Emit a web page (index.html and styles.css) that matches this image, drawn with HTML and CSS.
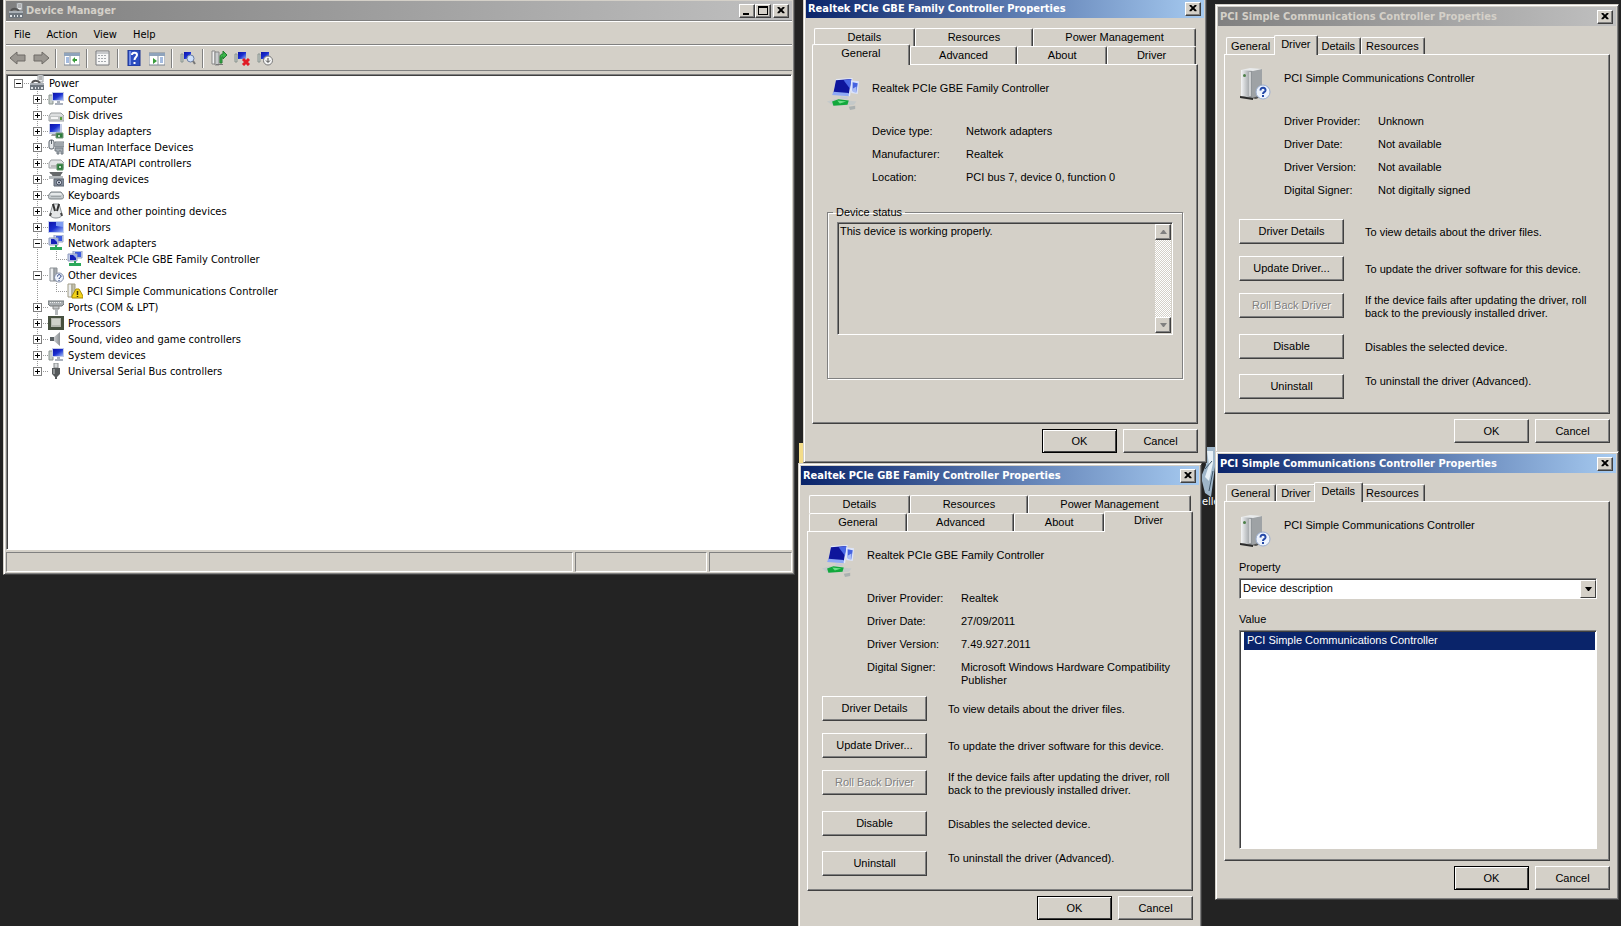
FILE: index.html
```html
<!DOCTYPE html>
<html lang="en">
<head>
<meta charset="utf-8">
<title>Device Manager</title>
<link rel="stylesheet" href="styles.css">
</head>
<body>
<svg class="sprite" width="0" height="0" aria-hidden="true">
  <defs>
    <linearGradient id="g-screen" x1="0" y1="0" x2="1" y2="1"><stop offset="0" stop-color="#0d12a8"/><stop offset=".5" stop-color="#1a2fd0"/><stop offset="1" stop-color="#9db8f5"/></linearGradient>
    <linearGradient id="g-metal" x1="0" y1="0" x2="1" y2="0"><stop offset="0" stop-color="#f4f5f6"/><stop offset="1" stop-color="#8b9094"/></linearGradient>
    <symbol id="i-root" viewBox="0 0 16 16"><path d="M9 0h5v7H9z" fill="#eceef0" stroke="#9a9fa3"/><path d="M10 2h3M10 4h3" stroke="#777"/><path d="M3 8c1-3 6-3 8 0" fill="none" stroke="#555" stroke-width="2"/><path d="M1 8h14v3H1z" fill="#a9afb5"/><path d="M1 10h14v5H1z" fill="#6d757d"/><path d="M2 12h2v2H2zM6 12h1v2H6zM9 12h1v2H9zM12 12h2v2h-2z" fill="#dfe3e6"/></symbol>
    <symbol id="i-pc" viewBox="0 0 16 16"><path d="M1 4h4v9H1z" fill="#c5ccc8" stroke="#8b9590"/><path d="M4 1h12v9H4z" fill="#c3cbe6"/><path d="M5 2h10v7H5z" fill="url(#g-screen)"/><path d="M9 10h3v2h3v2H7v-2h2z" fill="#aab1bd"/></symbol>
    <symbol id="i-disk" viewBox="0 0 16 16"><path d="M3 6h10l3 3v5H1V9z" fill="#dcdedf" stroke="#9b9fa1"/><path d="M2 9h13v4H2z" fill="#c1c5c5"/><path d="M3 10h7v2H3z" fill="#f5f5f5"/><path d="M12 10h2v3h-2z" fill="#5aa03c"/></symbol>
    <symbol id="i-display" viewBox="0 0 16 16"><path d="M1 1h13v10H1z" fill="#c3cbe6"/><path d="M2 1h10v8H2z" fill="url(#g-screen)"/><path d="M4 11h5v2H3z" fill="#999"/><path d="M8 10h7v5H8z" fill="#2d7d3c" stroke="#76977a"/><path d="M10 12h2v2h-2z" fill="#b9d8bc"/></symbol>
    <symbol id="i-hid" viewBox="0 0 16 16"><rect x="1" y="1" width="5" height="9" rx="2" fill="#e5e8eb" stroke="#59616a"/><path d="M3.500 1v4" stroke="#59616a"/><path d="M7 3h9v5H7z" fill="#d0d5d9" stroke="#727a82"/><path d="M8 5h7M8 7h7" stroke="#727a82"/><path d="M7 9h8v6h-2v-3h-2v3H9v-3H7z" fill="#a5adb4" stroke="#727a82"/></symbol>
    <symbol id="i-ide" viewBox="0 0 16 16"><path d="M3 5h10l3 3v5H1V8z" fill="#e3e5e6" stroke="#9b9fa1"/><path d="M3 10h6v2H3z" fill="#bbb"/><path d="M9 9h6v6H9z" fill="#2d7d3c" stroke="#5d8f63"/><path d="M11 11h2v2h-2z" fill="#c9e0ca"/></symbol>
    <symbol id="i-imaging" viewBox="0 0 16 16"><path d="M1 1h14l-3 4H5z" fill="#777d80"/><path d="M2 2h12M4 4h9" stroke="#555"/><path d="M1 5h14v3H1z" fill="#b5babd"/><path d="M6 8h10v7H6z" fill="#828c9b" stroke="#5c6470"/><circle cx="11" cy="11.500" r="2.500" fill="#dde4ef" stroke="#3b4250"/><circle cx="11" cy="11.500" r="1" fill="#28324a"/></symbol>
    <symbol id="i-keyboard" viewBox="0 0 16 16"><path d="M3 5h10l3 4c0 2-1 3-3 3H3c-2 0-3-1-3-3z" fill="#c4c9cc" stroke="#7d8387"/><path d="M3 6h10l1 2H2z" fill="#e6e9ea"/><path d="M3 9.500h10" stroke="#9da3a6"/></symbol>
    <symbol id="i-mouse" viewBox="0 0 16 16"><path d="M5 1h6l3 10c0 3-3 4-6 4s-6-1-6-4z" fill="#e4e6e7" stroke="#8a9094"/><path d="M5 1l2 7M11 1L9 8" stroke="#333" stroke-width="2"/><path d="M3 10l-1 3M13 10l1 3" stroke="#444" stroke-width="2"/></symbol>
    <symbol id="i-monitor" viewBox="0 0 16 16"><path d="M0 2h16v12H0z" fill="#c8d3ee"/><path d="M1 3h14v10H1z" fill="url(#g-screen)"/><path d="M8 3h7v5L8 7z" fill="#7f9cf0"/></symbol>
    <symbol id="i-net" viewBox="0 0 16 16"><path d="M6 0h9v7H6z" fill="#cbd5ef" stroke="#95a2c4"/><path d="M8 1h6v5H8z" fill="#3d5be0"/><path d="M1 3h9v7H1z" fill="#c3cde8" stroke="#8f9bbd"/><path d="M3 4h6v5H3z" fill="#1420b8"/><path d="M6 4h3v3z" fill="#8ea7f2"/><path d="M7 10h2v2h5v3H2v-3h5z" fill="#2aa85a"/></symbol>
    <symbol id="i-unknown" viewBox="0 0 16 16"><path d="M2 1h4v13H2z" fill="#eceeef" stroke="#8b9095"/><path d="M6 1h3v13H6z" fill="#a5aaae" stroke="#8b9095"/><circle cx="11" cy="10.500" r="4.500" fill="#eef3fc" stroke="#7f8ba5"/><path d="M9.500 9.500c0-2.500 3.500-2.500 3.500 0 0 1-2 1-2 2.500M11 13v1" fill="none" stroke="#1c3478"/></symbol>
    <symbol id="i-warn" viewBox="0 0 16 16"><path d="M1 1h4v13H1z" fill="#eceeef" stroke="#a09c85"/><path d="M5 1h3v13H5z" fill="#c4c2ae" stroke="#a09c85"/><path d="M9 6h3l4 7v2H5v-2z" fill="#f2d21b" stroke="#a88b00"/><path d="M10.500 8v4M10.500 13v1" stroke="#3a3000" stroke-width="1.500"/></symbol>
    <symbol id="i-port" viewBox="0 0 16 16"><path d="M0 2h16v3l-2 2H2L0 5z" fill="#a9aeb1" stroke="#73787b"/><path d="M2 3.500h12" stroke="#eee" stroke-dasharray="1 1"/><path d="M5 7h6v3H5z" fill="#c6cacc" stroke="#888"/><path d="M7 10h3v6H7z" fill="#b5b9bb"/></symbol>
    <symbol id="i-cpu" viewBox="0 0 16 16"><path d="M0 1h16v14H0z" fill="#46503e"/><path d="M3 3h10v9H3z" fill="#b4b7ae"/><path d="M4 4h8v6H4z" fill="#cfd1c9"/></symbol>
    <symbol id="i-sound" viewBox="0 0 16 16"><path d="M2 6h4l6-5v14l-6-5H2z" fill="url(#g-metal)"/><path d="M2 6h4v4H2z" fill="#596063"/></symbol>
    <symbol id="i-usb" viewBox="0 0 16 16"><path d="M6 0h4v5H6z" fill="#d5d8d9" stroke="#85898b"/><path d="M4 5h8v6l-3 3v2H7v-2l-3-3z" fill="#55595b"/><path d="M5 6h2v5H5z" fill="#8e9294"/></symbol>

    <symbol id="t-back" viewBox="0 0 16 16"><path d="M0 8l7-6v3h8v6H7v3z" fill="#9a9690" stroke="#6e6b66"/></symbol>
    <symbol id="t-forward" viewBox="0 0 16 16"><path d="M16 8L9 2v3H1v6h8v3z" fill="#9a9690" stroke="#6e6b66"/></symbol>
    <symbol id="t-tree" viewBox="0 0 16 16"><path d="M0 3h16v12H0z" fill="#fff" stroke="#7a8490"/><path d="M0 3h16v3H0z" fill="#8fa3bb"/><path d="M6 6v9" stroke="#8a93a0"/><path d="M2 8h3M2 10h3M2 12h3" stroke="#4a78c0"/><path d="M13 9h-2V7l-3 3 3 3v-2h2z" fill="#3a9c3a"/></symbol>
    <symbol id="t-list" viewBox="0 0 16 16"><path d="M1 1h13v14H1z" fill="#f7f7f7" stroke="#77797c"/><path d="M1 3h13" stroke="#9a9da1"/><path d="M3 5.500h9M3 8.500h9M3 11.500h9" stroke="#a4a8ac" stroke-dasharray="2 1"/></symbol>
    <symbol id="t-help" viewBox="0 0 16 16"><path d="M2 0h12v16H2z" fill="#2c4dc0" stroke="#1b3390"/><path d="M3 1h2v14H3z" fill="#6e8ae6"/><path d="M6 5c0-3 5-3 5 0 0 2-2.500 2-2.500 5M8.500 12v2" fill="none" stroke="#fff" stroke-width="2"/></symbol>
    <symbol id="t-props" viewBox="0 0 16 16"><path d="M0 3h16v12H0z" fill="#fff" stroke="#7a8490"/><path d="M0 3h16v3H0z" fill="#8fa3bb"/><path d="M9 6v9" stroke="#8a93a0"/><path d="M11 8h3M11 10h3M11 12h3" stroke="#4a78c0"/><path d="M4 8l4 3-4 3z" fill="#3a9c3a"/></symbol>
    <symbol id="t-scan" viewBox="0 0 16 16"><path d="M1 4h2v8H1z" fill="#c5ccc8" stroke="#8b9590"/><path d="M4 2h7v7H4z" fill="url(#g-screen)"/><circle cx="10.500" cy="8.500" r="3.500" fill="#cfe0fa" stroke="#6c7fa5"/><path d="M13 11l2 3" stroke="#777" stroke-width="2"/></symbol>
    <symbol id="t-update" viewBox="0 0 16 16"><path d="M1 1h3v13H1z" fill="#f2f2f2" stroke="#888"/><path d="M4 2h4v13H4z" fill="#c8cbcd" stroke="#888"/><path d="M5 14.500h7" stroke="#777"/><path d="M9 13V7c0-2 1-3 3-3V1l4 4-4 4V7h-1v6z" fill="#39b54a" stroke="#227a31"/></symbol>
    <symbol id="t-uninstall" viewBox="0 0 16 16"><path d="M1 4h2v8H1z" fill="#c5ccc8" stroke="#8b9590"/><path d="M4 2h8v7H4z" fill="url(#g-screen)"/><path d="M9 9l6 6M15 9l-6 6" stroke="#e01b24" stroke-width="3"/></symbol>
    <symbol id="t-disable" viewBox="0 0 16 16"><path d="M1 4h2v8H1z" fill="#c5ccc8" stroke="#8b9590"/><path d="M4 2h8v7H4z" fill="url(#g-screen)"/><circle cx="11" cy="10.500" r="4.500" fill="#f4f4f4" stroke="#777"/><path d="M11 8v4M9 10.500l2 2 2-2" fill="none" stroke="#444"/></symbol>

    <symbol id="big-net" viewBox="1 0 25 30" preserveAspectRatio="none"><path d="M19 2l7 1-1 12-5-1z" fill="#dce4fa"/><path d="M21 4l4 1-1 8-3-1z" fill="#4562e0"/><path d="M21 10l3-2v6l-3-1z" fill="#a9bbf5"/><path d="M8 1l13-1-2 17-13-2z" fill="#e1e8fb"/><path d="M8 2l12-1-2 14-12-1z" fill="#0e159c"/><path d="M14 2l6-1-1 9z" fill="#4a68e6"/><path d="M6 13l12 1v3L5 16z" fill="#8fa9f5"/><path d="M12 17l5 1v2l-6-1z" fill="#c3c9d6"/><path d="M1 22l6-2 17 2-2 3-16 1z" fill="#c4c9c9"/><path d="M5 22l5-2 8 1-1 4-11 1z" fill="#12a83c"/><path d="M9 21l7 1-5 2z" fill="#6fe08a"/><path d="M18 27l5-1v3l-4 1z" fill="#aab0b0"/></symbol>
    <symbol id="big-unknown" viewBox="0 0 32 32"><path d="M1 28l16 3 9-4-3-2z" fill="#555"/><path d="M2 2h11v28L2 28z" fill="url(#g-metal)"/><path d="M13 2l10-1v26l-10 3z" fill="#9ea2a5"/><path d="M2 2l9-2 12 1-9 2z" fill="#e8eaeb"/><circle cx="5.500" cy="7.500" r="1.500" fill="#4d7f48"/><path d="M11 4v24" stroke="#fff"/><path d="M1 28l13 2v2L1 30z" fill="#2c2c2c"/><circle cx="24" cy="24" r="7" fill="#edf3fd" stroke="#9badcd"/><path d="M21.500 22.500c0-4 5.500-3.500 5 0-.5 2-2.500 1.500-2.500 3.500M24 27v2" fill="none" stroke="#2448a8" stroke-width="2"/></symbol>
    <symbol id="g-close" viewBox="0 0 8 8"><path d="M0 0h2l2 2 2-2h2v1L5.500 3.500 8 6v1H6L4 5 2 7H0V6l2.500-2.500L0 1z" fill="#000"/></symbol>
  </defs>
</svg>

<main class="desktop">
  <span class="folder-edge"></span>
  <svg class="desk-icon" viewBox="0 0 14 52" aria-hidden="true"><path d="M3 0h11v20l-4 30-6-4L0 30l5-12z" fill="#9fb6c9"/><path d="M6 4h6v12L8 34l-4-4 4-12z" fill="#e8f1f7"/><path d="M2 8l4 4M4 22l7-8M8 44l4-20" stroke="#40566a"/></svg>
  <span class="desk-label">elle</span>

  <section class="window manager inactive" aria-label="Device Manager">
    <header class="titlebar">
      <svg class="icon"><use href="#i-root"/></svg>
      <h1 class="title">Device Manager</h1>
      <button class="caption" aria-label="Minimize"><svg width="8" height="8"><path d="M0 6h6v2H0z"/></svg></button>
      <button class="caption" aria-label="Maximize"><svg width="10" height="9"><path d="M0 0h10v9H0zM1 2v6h8V2z" fill-rule="evenodd"/></svg></button>
      <button class="caption close" aria-label="Close"><svg width="8" height="7"><use href="#g-close"/></svg></button>
    </header>
    <nav class="menubar">
      <button>File</button><button>Action</button><button>View</button><button>Help</button>
    </nav>
    <div class="toolbar" role="toolbar" aria-label="Tools">
      <button aria-label="Back" disabled><svg class="icon"><use href="#t-back"/></svg></button>
      <button aria-label="Forward" disabled><svg class="icon"><use href="#t-forward"/></svg></button>
      <i class="sep"></i>
      <button aria-label="Show console tree"><svg class="icon"><use href="#t-tree"/></svg></button>
      <i class="sep"></i>
      <button aria-label="Properties"><svg class="icon"><use href="#t-list"/></svg></button>
      <i class="sep"></i>
      <button aria-label="Help topics"><svg class="icon"><use href="#t-help"/></svg></button>
      <button aria-label="Show action pane"><svg class="icon"><use href="#t-props"/></svg></button>
      <i class="sep"></i>
      <button aria-label="Scan for hardware changes"><svg class="icon"><use href="#t-scan"/></svg></button>
      <i class="sep"></i>
      <button aria-label="Update driver"><svg class="icon"><use href="#t-update"/></svg></button>
      <button aria-label="Uninstall device"><svg class="icon"><use href="#t-uninstall"/></svg></button>
      <button aria-label="Disable device"><svg class="icon"><use href="#t-disable"/></svg></button>
    </div>
    <div class="tree">
      <div class="node"><button class="expander open" aria-label="Collapse"></button><svg class="icon"><use href="#i-root"/></svg><span>Power</span></div>
      <ul class="branch">
        <li class="node"><button class="expander" aria-label="Expand"></button><svg class="icon"><use href="#i-pc"/></svg><span>Computer</span></li>
        <li class="node"><button class="expander" aria-label="Expand"></button><svg class="icon"><use href="#i-disk"/></svg><span>Disk drives</span></li>
        <li class="node"><button class="expander" aria-label="Expand"></button><svg class="icon"><use href="#i-display"/></svg><span>Display adapters</span></li>
        <li class="node"><button class="expander" aria-label="Expand"></button><svg class="icon"><use href="#i-hid"/></svg><span>Human Interface Devices</span></li>
        <li class="node"><button class="expander" aria-label="Expand"></button><svg class="icon"><use href="#i-ide"/></svg><span>IDE ATA/ATAPI controllers</span></li>
        <li class="node"><button class="expander" aria-label="Expand"></button><svg class="icon"><use href="#i-imaging"/></svg><span>Imaging devices</span></li>
        <li class="node"><button class="expander" aria-label="Expand"></button><svg class="icon"><use href="#i-keyboard"/></svg><span>Keyboards</span></li>
        <li class="node"><button class="expander" aria-label="Expand"></button><svg class="icon"><use href="#i-mouse"/></svg><span>Mice and other pointing devices</span></li>
        <li class="node"><button class="expander" aria-label="Expand"></button><svg class="icon"><use href="#i-monitor"/></svg><span>Monitors</span></li>
        <li class="node"><button class="expander open" aria-label="Collapse"></button><svg class="icon"><use href="#i-net"/></svg><span>Network adapters</span></li>
        <li class="node leaf"><i class="elbow"></i><svg class="icon"><use href="#i-net"/></svg><span>Realtek PCIe GBE Family Controller</span></li>
        <li class="node"><button class="expander open" aria-label="Collapse"></button><svg class="icon"><use href="#i-unknown"/></svg><span>Other devices</span></li>
        <li class="node leaf"><i class="elbow"></i><svg class="icon"><use href="#i-warn"/></svg><span>PCI Simple Communications Controller</span></li>
        <li class="node"><button class="expander" aria-label="Expand"></button><svg class="icon"><use href="#i-port"/></svg><span>Ports (COM &amp; LPT)</span></li>
        <li class="node"><button class="expander" aria-label="Expand"></button><svg class="icon"><use href="#i-cpu"/></svg><span>Processors</span></li>
        <li class="node"><button class="expander" aria-label="Expand"></button><svg class="icon"><use href="#i-sound"/></svg><span>Sound, video and game controllers</span></li>
        <li class="node"><button class="expander" aria-label="Expand"></button><svg class="icon"><use href="#i-pc"/></svg><span>System devices</span></li>
        <li class="node"><button class="expander" aria-label="Expand"></button><svg class="icon"><use href="#i-usb"/></svg><span>Universal Serial Bus controllers</span></li>
      </ul>
    </div>
    <footer class="statusbar"><span></span><span></span><span></span></footer>
  </section>

  <section class="window dialog realtek-general" aria-label="Realtek general properties">
    <header class="titlebar"><h2 class="title">Realtek PCIe GBE Family Controller Properties</h2><button class="caption close" aria-label="Close"><svg width="8" height="7"><use href="#g-close"/></svg></button></header>
    <div class="body">
      <nav class="tabs stacked">
        <div class="tabrow upper"><button class="tab w100">Details</button><button class="tab w118">Resources</button><button class="tab w163">Power Management</button></div>
        <div class="tabrow"><button class="tab w97 selected">General</button><button class="tab w107">Advanced</button><button class="tab w89">About</button><button class="tab w88">Driver</button></div>
      </nav>
      <div class="panel">
        <div class="device"><svg class="big"><use href="#big-net"/></svg><span>Realtek PCIe GBE Family Controller</span></div>
        <dl class="facts short"><dt>Device type:</dt><dd>Network adapters</dd><dt>Manufacturer:</dt><dd>Realtek</dd><dt>Location:</dt><dd>PCI bus 7, device 0, function 0</dd></dl>
        <fieldset class="status"><legend>Device status</legend>
          <div class="statusbox"><textarea readonly aria-label="Device status">This device is working properly.</textarea>
            <div class="scroll"><button disabled aria-label="Scroll up"><svg width="7" height="4"><path d="M3 0h1l3 4H0z"/></svg></button><button disabled aria-label="Scroll down"><svg width="7" height="4"><path d="M0 0h7L4 4H3z"/></svg></button></div></div>
        </fieldset>
      </div>
      <footer class="actions"><button class="btn default">OK</button><button class="btn">Cancel</button></footer>
    </div>
  </section>

  <section class="window dialog realtek-driver" aria-label="Realtek driver properties">
    <header class="titlebar"><h2 class="title">Realtek PCIe GBE Family Controller Properties</h2><button class="caption close" aria-label="Close"><svg width="8" height="7"><use href="#g-close"/></svg></button></header>
    <div class="body">
      <nav class="tabs stacked">
        <div class="tabrow upper"><button class="tab w100">Details</button><button class="tab w118">Resources</button><button class="tab w163">Power Management</button></div>
        <div class="tabrow"><button class="tab w97">General</button><button class="tab w107">Advanced</button><button class="tab w89">About</button><button class="tab w88 selected">Driver</button></div>
      </nav>
      <div class="panel">
        <div class="device"><svg class="big"><use href="#big-net"/></svg><span>Realtek PCIe GBE Family Controller</span></div>
        <dl class="facts"><dt>Driver Provider:</dt><dd>Realtek</dd><dt>Driver Date:</dt><dd>27/09/2011</dd><dt>Driver Version:</dt><dd>7.49.927.2011</dd><dt>Digital Signer:</dt><dd>Microsoft Windows Hardware Compatibility Publisher</dd></dl>
        <div class="ops">
          <button class="btn">Driver Details</button><p>To view details about the driver files.</p>
          <button class="btn">Update Driver...</button><p>To update the driver software for this device.</p>
          <button class="btn" disabled>Roll Back Driver</button><p class="high">If the device fails after updating the driver, roll back to the previously installed driver.</p>
          <button class="btn">Disable</button><p>Disables the selected device.</p>
          <button class="btn">Uninstall</button><p class="high">To uninstall the driver (Advanced).</p>
        </div>
      </div>
      <footer class="actions"><button class="btn default">OK</button><button class="btn">Cancel</button></footer>
    </div>
  </section>

  <section class="window dialog inactive pci-driver" aria-label="PCI driver properties">
    <header class="titlebar"><h2 class="title">PCI Simple Communications Controller Properties</h2><button class="caption close" aria-label="Close"><svg width="8" height="7"><use href="#g-close"/></svg></button></header>
    <div class="body">
      <nav class="tabs"><div class="tabrow"><button class="tab">General</button><button class="tab selected">Driver</button><button class="tab">Details</button><button class="tab">Resources</button></div></nav>
      <div class="panel">
        <div class="device"><svg class="big"><use href="#big-unknown"/></svg><span>PCI Simple Communications Controller</span></div>
        <dl class="facts"><dt>Driver Provider:</dt><dd>Unknown</dd><dt>Driver Date:</dt><dd>Not available</dd><dt>Driver Version:</dt><dd>Not available</dd><dt>Digital Signer:</dt><dd>Not digitally signed</dd></dl>
        <div class="ops">
          <button class="btn">Driver Details</button><p>To view details about the driver files.</p>
          <button class="btn">Update Driver...</button><p>To update the driver software for this device.</p>
          <button class="btn" disabled>Roll Back Driver</button><p class="high">If the device fails after updating the driver, roll back to the previously installed driver.</p>
          <button class="btn">Disable</button><p>Disables the selected device.</p>
          <button class="btn">Uninstall</button><p class="high">To uninstall the driver (Advanced).</p>
        </div>
      </div>
      <footer class="actions"><button class="btn">OK</button><button class="btn">Cancel</button></footer>
    </div>
  </section>

  <section class="window dialog pci-details" aria-label="PCI details">
    <header class="titlebar"><h2 class="title">PCI Simple Communications Controller Properties</h2><button class="caption close" aria-label="Close"><svg width="8" height="7"><use href="#g-close"/></svg></button></header>
    <div class="body">
      <nav class="tabs"><div class="tabrow"><button class="tab">General</button><button class="tab">Driver</button><button class="tab selected">Details</button><button class="tab">Resources</button></div></nav>
      <div class="panel details">
        <div class="device"><svg class="big"><use href="#big-unknown"/></svg><span>PCI Simple Communications Controller</span></div>
        <label class="field-label" for="property">Property</label>
        <div class="combo"><select id="property"><option>Device description</option></select><i class="drop"><svg width="7" height="4"><path d="M0 0h7L4 4H3z"/></svg></i></div>
        <span class="field-label" id="value-label">Value</span>
        <ul class="listbox" role="listbox" aria-labelledby="value-label"><li role="option" aria-selected="true">PCI Simple Communications Controller</li></ul>
      </div>
      <footer class="actions"><button class="btn default">OK</button><button class="btn">Cancel</button></footer>
    </div>
  </section>
</main>
</body>
</html>
```
FILE: styles.css
```css
:root {
  --face: #d4d0c8;
  --shade: #808080;
  --dark: #404040;
  --navy: #0a246a;
  --ui: "Liberation Sans", Arial, sans-serif;
  --tahoma: "DejaVu Sans Condensed", "Noto Sans", sans-serif;
}
* { box-sizing: border-box; }
body { margin: 0; background: #232323; font: 11px/13px var(--ui); color: #000; }
button, select, textarea { font: inherit; color: inherit; }
button { border: 0; padding: 0; background: none; }
h1, h2, p, ul, dl, dd { margin: 0; padding: 0; }
ul { list-style: none; }
.sprite { position: absolute; }
.icon { width: 16px; height: 16px; flex: none; display: block; }

.desktop { position: relative; height: 100vh; overflow: hidden; background: #232323; }
.folder-edge { position: absolute; left: 799px; top: 443px; width: 8px; height: 20px; background: #f3dc8a; }
.desk-icon { position: absolute; left: 1201px; top: 447px; width: 14px; height: 52px; }
.desk-label { position: absolute; left: 1202px; top: 495px; color: #fff; font-family: var(--tahoma); }

.window {
  position: absolute;
  display: flex;
  flex-direction: column;
  padding: 2px;
  background: var(--face);
  border: 1px solid;
  border-color: var(--face) var(--dark) var(--dark) var(--face);
  box-shadow: inset 1px 1px #fff, inset -1px -1px var(--shade);
}
.manager { left: 3px; top: -2px; width: 792px; height: 577px; }
.dialog { width: 404px; }
.realtek-general { left: 803px; top: -4px; }
.realtek-driver { left: 798px; top: 463px; }
.pci-driver { left: 1215px; top: 4px; }
.pci-details { left: 1215px; top: 451px; }

.titlebar {
  display: flex;
  align-items: center;
  height: 19px;
  padding: 0 3px 0 2px;
  background: linear-gradient(90deg, var(--navy), #a6caf0);
  color: #fff;
}
.inactive .titlebar { background: linear-gradient(90deg, #808080, #c0c0c0); color: var(--face); }
.title { flex: 1; font: bold 11px/14px var(--tahoma); }
.manager .title { padding-left: 2px; }
.caption {
  display: grid;
  place-items: center;
  width: 16px;
  height: 14px;
  background: var(--face);
  border: 1px solid;
  border-color: #fff var(--dark) var(--dark) #fff;
  box-shadow: inset -1px -1px var(--shade);
}
.manager .close { margin-left: 2px; }

.menubar { display: flex; height: 25px; border-bottom: 1px solid var(--shade); border-top: 1px solid var(--shade); box-shadow: inset 0 1px #fff; font-family: var(--tahoma); }
.menubar button { padding: 3px 8px 0; }
.toolbar { display: flex; align-items: center; height: 26px; border-top: 1px solid #fff; border-bottom: 1px solid var(--shade); }
.toolbar button { display: grid; place-items: center; width: 23px; height: 22px; }
.sep { width: 2px; height: 19px; margin: 0 3px; background: linear-gradient(90deg, var(--shade) 50%, #fff 50%); }

.tree { flex: 1; margin-top: 3px; background: #fff; border: 1px solid; border-color: var(--shade) #fff #fff var(--shade); box-shadow: inset 1px 1px var(--dark); padding: 0 0 0 7px; font-family: var(--tahoma); }
.node { display: flex; align-items: center; height: 16px; }
.node span { padding-left: 4px; white-space: nowrap; }
.node .icon { position: relative; }
.branch { margin-left: 19px; background: repeating-linear-gradient(#999 0 1px, transparent 1px 2px) 4px 0 / 1px 280px no-repeat; }
.expander { position: relative; width: 9px; height: 9px; margin-right: 6px; background: linear-gradient(#000, #000) center / 5px 1px no-repeat, linear-gradient(#000, #000) center / 1px 5px no-repeat, #fff; border: 1px solid var(--shade); }
.expander.open { background: linear-gradient(#000, #000) center / 5px 1px no-repeat, #fff; }
.expander::after { content: ""; position: absolute; left: 9px; top: 3px; width: 5px; border-top: 1px dotted #999; }
.leaf { padding-left: 23px; }
.elbow { width: 11px; height: 9px; margin: 0 0 8px; border: dotted #999; border-width: 0 0 1px 1px; }

.statusbar { display: grid; grid-template-columns: 566fr 131fr 83fr; gap: 2px; height: 20px; margin-top: 2px; }
.statusbar span { border: 1px solid; border-color: var(--shade) #fff #fff var(--shade); }

.body { padding: 9px 6px 7px 6px; }
.tabs { padding: 0 2px; }
.tabrow { display: flex; align-items: flex-end; height: 19px; }
.stacked .tabrow { height: 18px; }
.tab { flex: none; height: 17px; padding: 0 5px 0 4px; border: 1px solid; border-color: #fff var(--dark) transparent #fff; border-bottom: 0; border-radius: 2px 2px 0 0; box-shadow: inset -1px 0 var(--shade); background: var(--face); white-space: nowrap; }
.tab.selected { position: relative; height: 20px; margin: 0 -2px -1px; padding: 0 7px 3px 6px; }
.stacked { padding-top: 1px; }
.stacked .tab { height: 18px; min-width: 0; padding-left: 0; padding-right: 0; }
.stacked .tab.selected { height: 21px; }
.stacked .selected:first-child { margin-right: 0; }
.stacked .selected:last-child { margin-left: 0; }
.w100 { flex: 100 1 0; }
.w118 { flex: 118 1 0; }
.w163 { flex: 163 1 0; }
.w97 { flex: 97 1 0; }
.w107 { flex: 107 1 0; }
.w89 { flex: 89 1 0; }
.w88 { flex: 88 1 0; }

.panel { height: 360px; padding: 13px 12px 0 14px; border: 1px solid; border-color: #fff var(--dark) var(--dark) #fff; box-shadow: inset -1px -1px var(--shade); }
.device { display: flex; gap: 13px; height: 32px; }
.device span { padding-top: 4px; }
.big { width: 32px; height: 32px; flex: none; }
.facts { display: grid; grid-template-columns: 94px 210px; grid-auto-rows: minmax(13px, auto); row-gap: 10px; align-content: start; height: 119px; padding: 15px 0 0 45px; }
.facts.short { height: 96px; }
.ops { display: grid; grid-template-columns: 106px 230px; column-gap: 20px; grid-template-rows: 37px 37px 41px 40px 25px; align-items: start; }
.ops p { padding-top: 7px; }
.ops .high { padding-top: 1px; }
.btn { width: 75px; height: 24px; border: 1px solid; border-color: #fff var(--dark) var(--dark) #fff; box-shadow: inset -1px -1px var(--shade); }
.ops .btn { width: 105px; height: 25px; }
.btn:disabled { color: var(--shade); text-shadow: 1px 1px #fff; }
.btn.default { border-color: #000; box-shadow: inset 1px 1px #fff, inset -1px -1px var(--dark); }
.actions { display: flex; justify-content: flex-end; gap: 6px; padding-top: 5px; }

.status { height: 173px; margin: 0 2px 0 0; padding: 3px 9px 0 9px; border: 1px solid var(--shade); box-shadow: inset 1px 1px #fff, 1px 1px #fff; }
.status legend { padding: 0 3px; margin-left: -4px; }
.statusbox { display: flex; height: 113px; border: 1px solid; border-color: var(--shade) #fff #fff var(--shade); box-shadow: inset 1px 1px var(--dark); padding: 1px; }
.statusbox textarea { flex: 1; min-width: 0; padding: 1px; border: 0; background: none; resize: none; outline: 0; overflow: hidden; }
.scroll { display: flex; flex-direction: column; justify-content: space-between; width: 16px; background: repeating-conic-gradient(#fff 0 25%, var(--face) 0 50%) 0 0 / 2px 2px; }
.scroll button { display: grid; place-items: center; height: 16px; background: var(--face); border: 1px solid; border-color: #fff var(--dark) var(--dark) #fff; box-shadow: inset -1px -1px var(--shade); fill: var(--shade); }

.field-label { display: block; margin: 14px 0 4px; }
.combo { position: relative; height: 21px; background: #fff; border: 1px solid; border-color: var(--shade) #fff #fff var(--shade); box-shadow: inset 1px 1px var(--dark); }
.combo select { appearance: none; width: 100%; height: 19px; padding: 0 3px; border: 0; background: none; }
.drop { position: absolute; top: 1px; right: 0; bottom: 0; width: 16px; display: grid; place-items: center; background: var(--face); border: 1px solid; border-color: #fff var(--dark) var(--dark) #fff; pointer-events: none; }
.listbox { height: 219px; background: #fff; border: 1px solid; border-color: var(--shade) #fff #fff var(--shade); box-shadow: inset 1px 1px var(--dark); padding: 1px 1px 0 4px; }
.listbox li { padding: 2px 3px; height: 18px; background: var(--navy); color: #fff; }
```
